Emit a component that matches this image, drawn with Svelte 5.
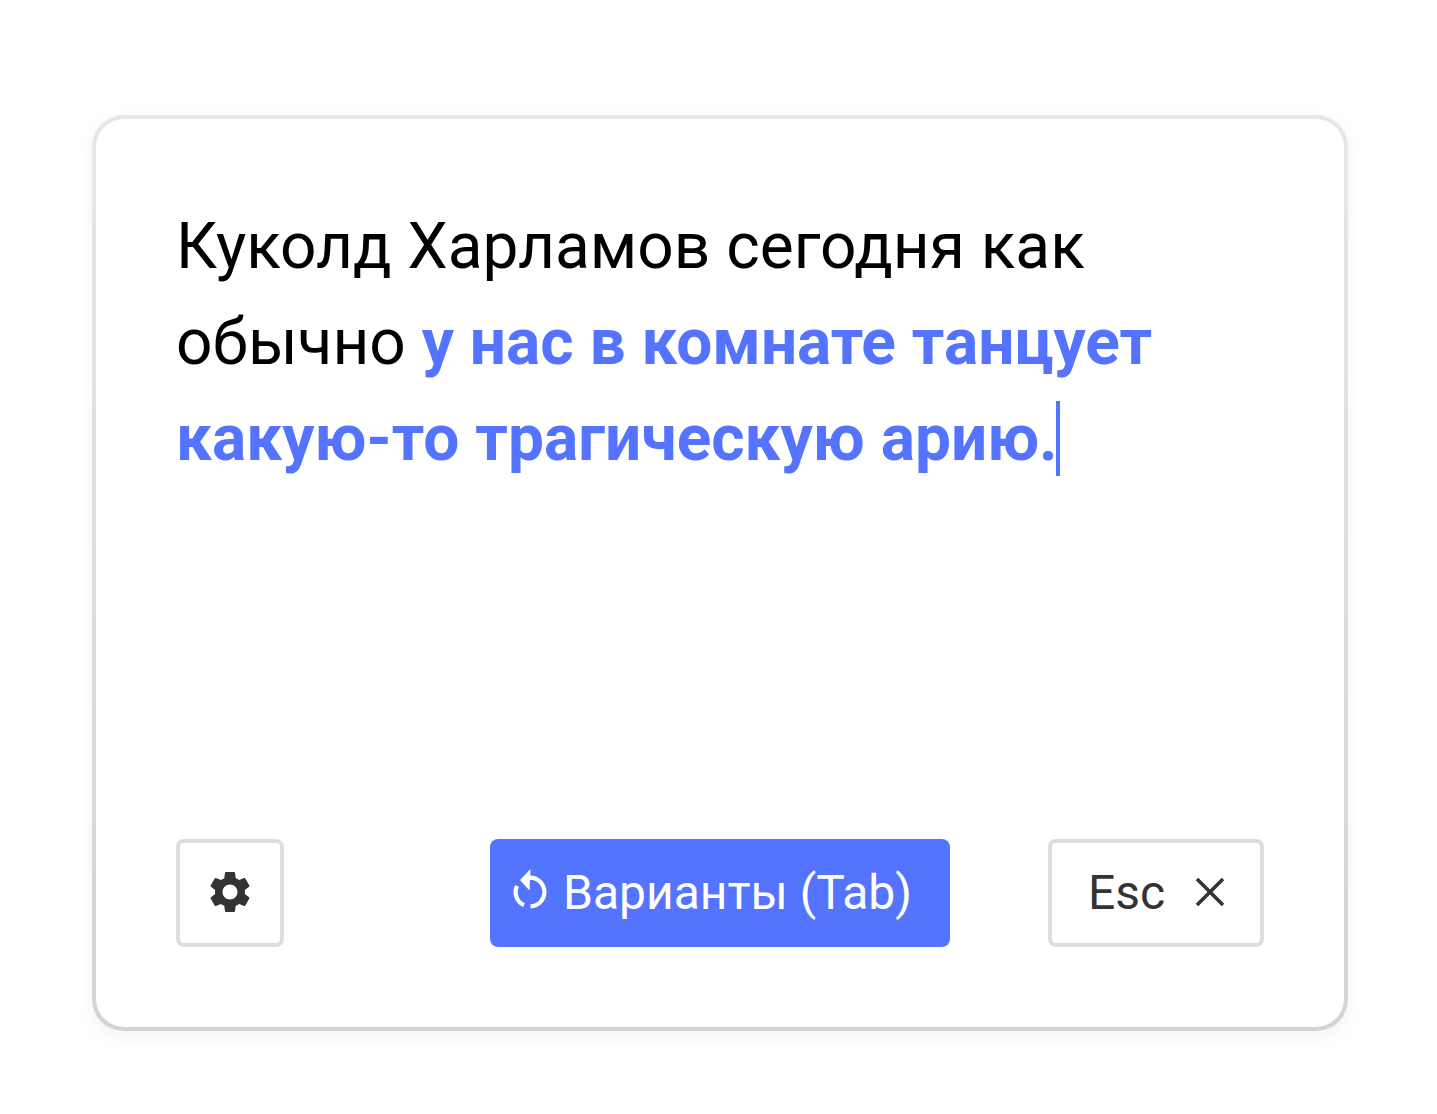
<script>
  let before = 'Куколд Харламов сегодня как обычно ';
  let suggestion = 'у нас в комнате танцует какую-то трагическую арию.';
</script>

<div class="page">
  <div class="card">
    <p class="text">{before}<span class="suggestion">{suggestion}</span><span class="caret"></span></p>
    <div class="actions">
      <button class="btn icon-btn" aria-label="Настройки">
        <svg width="50" height="50" viewBox="0 0 24 24" fill="#333">
          <path d="M19.14 12.94c.04-.3.06-.61.06-.94 0-.32-.02-.64-.07-.94l2.03-1.58c.18-.14.23-.41.12-.61l-1.92-3.32c-.12-.22-.37-.29-.59-.22l-2.39.96c-.5-.38-1.03-.7-1.62-.94l-.36-2.54c-.04-.24-.24-.41-.48-.41h-3.84c-.24 0-.43.17-.47.41l-.36 2.54c-.59.24-1.13.57-1.62.94l-2.39-.96c-.22-.08-.47 0-.59.22L2.74 8.87c-.12.21-.08.47.12.61l2.03 1.58c-.05.3-.09.63-.09.94s.02.64.07.94l-2.03 1.58c-.18.14-.23.41-.12.61l1.92 3.32c.12.22.37.29.59.22l2.39-.96c.5.38 1.03.7 1.62.94l.36 2.54c.05.24.24.41.48.41h3.84c.24 0 .44-.17.47-.41l.36-2.54c.59-.24 1.13-.56 1.62-.94l2.39.96c.22.08.47 0 .59-.22l1.92-3.32c.12-.22.07-.47-.12-.61l-2.01-1.58zM12 15.6c-1.98 0-3.6-1.62-3.6-3.6s1.62-3.6 3.6-3.6 3.6 1.62 3.6 3.6-1.62 3.6-3.6 3.6z"/>
        </svg>
      </button>
      <button class="btn primary">
        <svg width="40" height="50" viewBox="10 7 40 50" fill="none" stroke="#fff" stroke-width="4.2">
          <path d="M29.5 17.6a14.4 14.4 0 0 1 1 28.8"/>
          <path d="M24 45.1A14.4 14.4 0 0 1 17 25.8"/>
          <path d="M30.5 9 20 20l9.5 10.5z" fill="#fff" stroke="none"/>
        </svg>
        <span>Варианты (Tab)</span>
      </button>
      <button class="btn esc">
        <span>Esc</span>
        <svg width="32" height="32" viewBox="0 0 32 32" stroke="#333" stroke-width="3.6">
          <path d="M3 3 29 29M29 3 3 29"/>
        </svg>
      </button>
    </div>
  </div>
</div>

<style>
  :global(body) {
    background: #fff;
  }

  .page {
    padding: 115px 89px 83px 92px;
    font-family: Roboto, "Noto Sans", sans-serif;
  }

  .card {
    box-sizing: border-box;
    width: 1256px;
    height: 916px;
    padding: 80px;
    display: flex;
    flex-direction: column;
    justify-content: space-between;
    border: 4px solid transparent;
    border-radius: 32px;
    background: linear-gradient(#fff, #fff) padding-box, linear-gradient(#e7e7e7, #d4d4d4) border-box;
    box-shadow: 0 6px 20px rgba(0, 0, 0, 0.05);
  }

  .text {
    margin: 0;
    font-size: 64px;
    line-height: 96px;
    color: #000;
  }

  .suggestion {
    font-weight: 700;
    color: #5474ff;
  }

  .caret {
    display: inline-block;
    width: 4px;
    height: 75px;
    margin-left: -2px;
    vertical-align: -16px;
    background: #5474ff;
  }

  .actions {
    display: flex;
    align-items: center;
  }

  .btn {
    box-sizing: border-box;
    height: 108px;
    display: flex;
    align-items: center;
    justify-content: center;
    font-family: inherit;
    font-size: 48px;
    background: #fff;
    color: #333;
    border: 4px solid #ddd;
    border-radius: 8px;
    padding: 0 0 2px;
  }

  .icon-btn {
    width: 108px;
  }

  .primary {
    width: 460px;
    margin-left: 206px;
    justify-content: flex-start;
    padding-left: 20px;
    gap: 13px;
    background: #5474ff;
    border: 0;
    color: #fff;
  }

  .esc {
    width: 216px;
    margin-left: 98px;
    padding-left: 2px;
    gap: 29px;
  }
</style>
